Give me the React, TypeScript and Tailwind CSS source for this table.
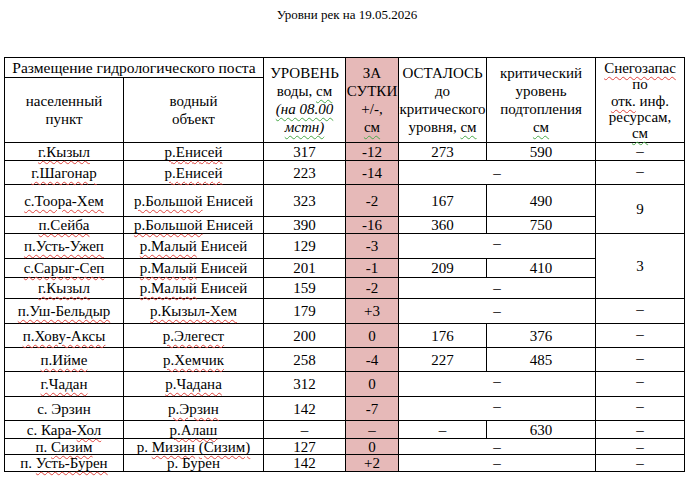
import React from "react";

const redCls =
  "underline decoration-wavy decoration-[#e0443e] decoration-1 underline-offset-[3px]";
const greenCls =
  "underline decoration-wavy decoration-[#4aa84a] decoration-1 underline-offset-[3px]";

function R({ children }: { children: React.ReactNode }) {
  return <span className={redCls}>{children}</span>;
}
function G({ children }: { children: React.ReactNode }) {
  return <span className={greenCls}>{children}</span>;
}

const c = "border border-black p-0 text-center align-middle whitespace-nowrap";
const pink = "border border-black p-0 text-center align-middle whitespace-nowrap bg-[#e6b9b8]";
const snowDash = "border border-black p-0 pb-[4px] text-center align-middle whitespace-nowrap";
const snowDashLow = "border border-black p-0 pb-[1px] text-center align-middle whitespace-nowrap";
const topDash = "border border-black p-0 pb-[6px] text-center align-middle whitespace-nowrap";

function Head({ children, lh }: { children: React.ReactNode; lh: string }) {
  return (
    <div className={`h-[84px] flex flex-col justify-center items-center overflow-visible ${lh}`}>
      {children}
    </div>
  );
}

export default function App() {
  return (
    <div
      className="w-[694px] h-[478px] bg-white text-black overflow-hidden"
      style={{ fontFamily: '"Liberation Serif", "Times New Roman", serif' }}
    >
      <div className="pt-[7px] text-center text-[13px] leading-[16px]">Уровни рек на 19.05.2026</div>
      <table className="mt-[34px] ml-[4px] w-[680px] table-fixed border-collapse text-[15px] leading-[14px]">
        <colgroup>
          <col className="w-[119px]" />
          <col className="w-[140px]" />
          <col className="w-[82px]" />
          <col className="w-[53px]" />
          <col className="w-[88px]" />
          <col className="w-[109px]" />
          <col className="w-[89px]" />
        </colgroup>
        <tbody>
          <tr className="h-[20px]">
            <td colSpan={2} className={`${c} text-[15.5px]`}>Размещение гидрологического поста</td>
            <td rowSpan={2} className={c}>
              <Head lh="leading-[18px]">
                <span>УРОВЕНЬ</span>
                <span>
                  воды, <G>см</G>
                </span>
                <i>
                  <G>(на 08.00</G>
                </i>
                <i>
                  <G>мстн)</G>
                </i>
              </Head>
            </td>
            <td rowSpan={2} className={pink}>
              <Head lh="leading-[18px]">
                <span>ЗА</span>
                <span>СУТКИ</span>
                <span>+/-,</span>
                <G>см</G>
              </Head>
            </td>
            <td rowSpan={2} className={c}>
              <Head lh="leading-[18px]">
                <span>ОСТАЛОСЬ</span>
                <span>до</span>
                <span>критического</span>
                <span>
                  уровня, <G>см</G>
                </span>
              </Head>
            </td>
            <td rowSpan={2} className={c}>
              <Head lh="leading-[18px]">
                <span>критический</span>
                <span>уровень</span>
                <span>подтопления</span>
                <G>см</G>
              </Head>
            </td>
            <td rowSpan={2} className={c}>
              <Head lh="leading-[16.5px]">
                <span>
                  <R>Снегозапас</R>
                </span>
                <span>по</span>
                <span>
                  <R>отк.</R> инф.
                </span>
                <span>ресурсам,</span>
                <span className="leading-[15px]">
                  <G>см</G>
                </span>
              </Head>
            </td>
          </tr>
          <tr className="h-[65px]">
            <td className={`${c} leading-[18px]`}>
              населенный
              <br />
              пункт
            </td>
            <td className={`${c} leading-[18px]`}>
              водный
              <br />
              объект
            </td>
          </tr>

          <tr className="h-[18px]">
            <td className={c}><R>г.Кызыл</R></td>
            <td className={c}><R>р.Енисей</R></td>
            <td className={c}>317</td>
            <td className={pink}>-12</td>
            <td className={c}>273</td>
            <td className={c}>590</td>
            <td className={snowDashLow}>–</td>
          </tr>
          <tr className="h-[24px]">
            <td className={c}><R>г.Шагонар</R></td>
            <td className={c}><R>р.Енисей</R></td>
            <td className={c}>223</td>
            <td className={pink}>-14</td>
            <td colSpan={2} className={c}>–</td>
            <td className={snowDash}>–</td>
          </tr>
          <tr className="h-[32px]">
            <td className={c}><R>с.Тоора-Хем</R></td>
            <td className={c}><R>р.Большой</R> Енисей</td>
            <td className={c}>323</td>
            <td className={pink}>-2</td>
            <td className={c}>167</td>
            <td className={c}>490</td>
            <td rowSpan={2} className={c}>9</td>
          </tr>
          <tr className="h-[17px]">
            <td className={c}><R>п.Сейба</R></td>
            <td className={c}><R>р.Большой</R> Енисей</td>
            <td className={c}>390</td>
            <td className={pink}>-16</td>
            <td className={c}>360</td>
            <td className={c}>750</td>
          </tr>
          <tr className="h-[25px]">
            <td className={c}><R>п.Усть-Ужеп</R></td>
            <td className={c}><R>р.Малый</R> Енисей</td>
            <td className={c}>129</td>
            <td className={pink}>-3</td>
            <td colSpan={2} className={topDash}>–</td>
            <td rowSpan={3} className={c}>3</td>
          </tr>
          <tr className="h-[19px]">
            <td className={c}><R>с.Сарыг-Сеп</R></td>
            <td className={c}><R>р.Малый</R> Енисей</td>
            <td className={c}>201</td>
            <td className={pink}>-1</td>
            <td className={c}>209</td>
            <td className={c}>410</td>
          </tr>
          <tr className="h-[21px]">
            <td className={c}><R>г.Кызыл</R></td>
            <td className={c}><R>р.Малый</R> Енисей</td>
            <td className={c}>159</td>
            <td className={pink}>-2</td>
            <td colSpan={2} className={c}>–</td>
          </tr>
          <tr className="h-[25px]">
            <td className={c}><R>п.Уш-Бельдыр</R></td>
            <td className={c}><R>р.Кызыл-Хем</R></td>
            <td className={c}>179</td>
            <td className={pink}>+3</td>
            <td colSpan={2} className={c}>–</td>
            <td className={snowDash}>–</td>
          </tr>
          <tr className="h-[24px]">
            <td className={c}><R>п.Хову-Аксы</R></td>
            <td className={c}><R>р.Элегест</R></td>
            <td className={c}>200</td>
            <td className={pink}>0</td>
            <td className={c}>176</td>
            <td className={c}>376</td>
            <td className={snowDash}>–</td>
          </tr>
          <tr className="h-[24px]">
            <td className={c}><R>п.Ийме</R></td>
            <td className={c}><R>р.Хемчик</R></td>
            <td className={c}>258</td>
            <td className={pink}>-4</td>
            <td className={c}>227</td>
            <td className={c}>485</td>
            <td className={snowDash}>–</td>
          </tr>
          <tr className="h-[25px]">
            <td className={c}><R>г.Чадан</R></td>
            <td className={c}><R>р.Чадана</R></td>
            <td className={c}>312</td>
            <td className={pink}>0</td>
            <td colSpan={2} className={topDash}>–</td>
            <td className={topDash}>–</td>
          </tr>
          <tr className="h-[24px]">
            <td className={c}>с. Эрзин</td>
            <td className={c}><R>р.Эрзин</R></td>
            <td className={c}>142</td>
            <td className={pink}>-7</td>
            <td colSpan={2} className={topDash}>–</td>
            <td className={topDash}>–</td>
          </tr>
          <tr className="h-[18px]">
            <td className={c}>с. Кара-<R>Хол</R></td>
            <td className={c}><R>р.Алаш</R></td>
            <td className={c}>–</td>
            <td className={pink}>–</td>
            <td className={c}>–</td>
            <td className={c}>630</td>
            <td className={c}>–</td>
          </tr>
          <tr className="h-[16px]">
            <td className={c}>п. <R>Сизим</R></td>
            <td className={c}>р. <R>Мизин</R> <R>(Сизим)</R></td>
            <td className={c}>127</td>
            <td className={pink}>0</td>
            <td colSpan={2} className={c}>–</td>
            <td className={c}>–</td>
          </tr>
          <tr className="h-[17px]">
            <td className={c}>п. <R>Усть-Бурен</R></td>
            <td className={c}>р. Бурен</td>
            <td className={c}>142</td>
            <td className={pink}>+2</td>
            <td colSpan={2} className={c}>–</td>
            <td className={c}>–</td>
          </tr>
        </tbody>
      </table>
    </div>
  );
}
